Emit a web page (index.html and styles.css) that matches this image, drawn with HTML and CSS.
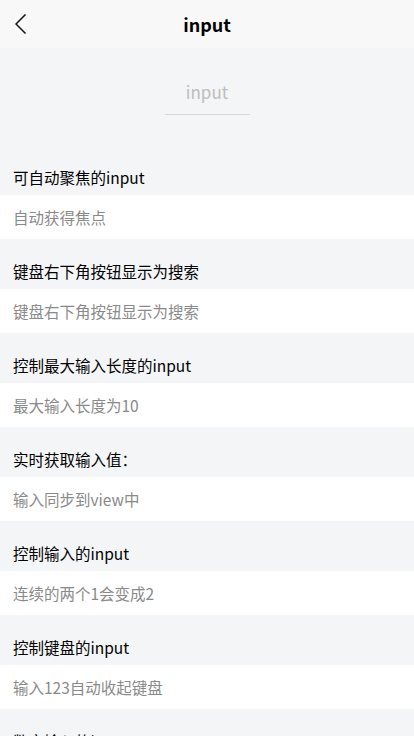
FILE: index.html
```html
<!DOCTYPE html>
<html lang="zh-CN">
<head>
<meta charset="utf-8">
<meta name="viewport" content="width=device-width, initial-scale=1">
<title>input</title>
<link rel="stylesheet" href="styles.css">
</head>
<body>
<div class="page">
  <header class="nav">
    <span class="nav-back">
      <svg width="24" height="24" viewBox="0 0 24 24"><polyline points="10.5,0.5 1,10 10.5,19.5" fill="none" stroke="#111" stroke-width="1.5"/></svg>
    </span>
    <h1 class="nav-title">input</h1>
  </header>
  <div class="demo">
    <div class="demo-input">input</div>
  </div>
  <div class="section">
    <div class="section-title">可自动聚焦的input</div>
    <div class="section-row">自动获得焦点</div>
  </div>
  <div class="section">
    <div class="section-title">键盘右下角按钮显示为搜索</div>
    <div class="section-row">键盘右下角按钮显示为搜索</div>
  </div>
  <div class="section">
    <div class="section-title">控制最大输入长度的input</div>
    <div class="section-row">最大输入长度为10</div>
  </div>
  <div class="section">
    <div class="section-title">实时获取输入值：</div>
    <div class="section-row">输入同步到view中</div>
  </div>
  <div class="section">
    <div class="section-title">控制输入的input</div>
    <div class="section-row">连续的两个1会变成2</div>
  </div>
  <div class="section">
    <div class="section-title">控制键盘的input</div>
    <div class="section-row">输入123自动收起键盘</div>
  </div>
  <div class="section">
    <div class="section-title">数字输入的input</div>
    <div class="section-row">这是一个数字输入框</div>
  </div>
</div>
</body>
</html>
```

FILE: styles.css
```css
html, body {
  margin: 0;
  padding: 0;
}
body {
  background: #f4f5f7;
  font-family: "Noto Sans CJK SC", "Noto Sans", sans-serif;
  color: #000;
}
.page {
  width: 414px;
  overflow: hidden;
}
.nav {
  position: relative;
  height: 48px;
  background: #f8f8f8;
  display: flex;
  align-items: center;
  justify-content: center;
}
.nav-back {
  position: absolute;
  left: 15px;
  top: 14px;
  width: 24px;
  height: 24px;
  display: block;
}
.nav-back svg {
  display: block;
}
.nav-title {
  margin: 0;
  font-size: 18px;
  font-weight: 700;
  line-height: 48px;
}
.demo {
  height: 97px;
  display: flex;
  justify-content: center;
  box-sizing: border-box;
  padding-top: 22px;
}
.demo-input {
  width: 85px;
  height: 44px;
  border-bottom: 1px solid #d9d9d9;
  box-sizing: content-box;
  text-align: center;
  line-height: 44px;
  font-size: 17px;
  color: #bdbdbd;
}
.section-title {
  padding: 21px 13px 7px;
  font-size: 15.5px;
  line-height: 22px;
  color: #000;
}
.section-row {
  background: #fff;
  height: 44px;
  padding: 0 13px;
  line-height: 44px;
  font-size: 15.5px;
  color: #8a8a8a;
}
```
